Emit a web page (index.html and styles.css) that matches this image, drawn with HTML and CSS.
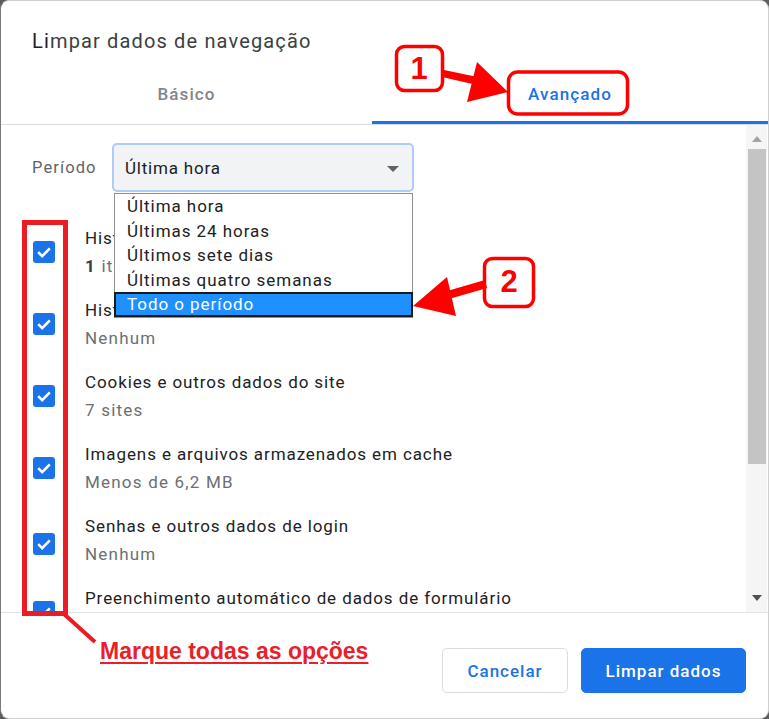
FILE: index.html
```
<!DOCTYPE html>
<html lang="pt">
<head>
<meta charset="utf-8">
<title>Limpar dados de navegação</title>
<link rel="stylesheet" href="styles.css">
</head>
<body>
<div class="stage">
  <div class="dialog">
    <div class="title"><span class="title-strong">Li</span>mpar dados de navegação</div>
    <div class="tabs">
      <div class="tab tab-basic">Básico</div>
      <div class="tab tab-active">Avançado</div>
    </div>
    <div class="body">
      <div class="content">
        <div class="period-row">
          <span class="period-label">Período</span>
          <div class="select">
            <span>Última hora</span>
            <svg class="select-arrow" width="12" height="6" viewBox="0 0 12 6"><path d="M0 0 L12 0 L6 6 Z" fill="#5f6368"/></svg>
          </div>
        </div>
        <div class="item">
          <svg class="check" width="22" height="22" viewBox="0 0 22 22"><rect x="0" y="0" width="22" height="22" rx="3" fill="#1a73e8"/><path d="M5.2 11.2 L9.2 15.2 L16.8 7.4" fill="none" stroke="#fff" stroke-width="2.6"/></svg>
          <div class="item-text"><div class="item-title">Histórico de navegação</div><div class="item-sub"><b class="num">1</b> item</div></div>
        </div>
        <div class="item">
          <svg class="check" width="22" height="22" viewBox="0 0 22 22"><rect x="0" y="0" width="22" height="22" rx="3" fill="#1a73e8"/><path d="M5.2 11.2 L9.2 15.2 L16.8 7.4" fill="none" stroke="#fff" stroke-width="2.6"/></svg>
          <div class="item-text"><div class="item-title">Histórico de downloads</div><div class="item-sub">Nenhum</div></div>
        </div>
        <div class="item">
          <svg class="check" width="22" height="22" viewBox="0 0 22 22"><rect x="0" y="0" width="22" height="22" rx="3" fill="#1a73e8"/><path d="M5.2 11.2 L9.2 15.2 L16.8 7.4" fill="none" stroke="#fff" stroke-width="2.6"/></svg>
          <div class="item-text"><div class="item-title">Cookies e outros dados do site</div><div class="item-sub">7 sites</div></div>
        </div>
        <div class="item">
          <svg class="check" width="22" height="22" viewBox="0 0 22 22"><rect x="0" y="0" width="22" height="22" rx="3" fill="#1a73e8"/><path d="M5.2 11.2 L9.2 15.2 L16.8 7.4" fill="none" stroke="#fff" stroke-width="2.6"/></svg>
          <div class="item-text"><div class="item-title">Imagens e arquivos armazenados em cache</div><div class="item-sub">Menos de 6,2 MB</div></div>
        </div>
        <div class="item item-shift">
          <svg class="check" width="22" height="22" viewBox="0 0 22 22"><rect x="0" y="0" width="22" height="22" rx="3" fill="#1a73e8"/><path d="M5.2 11.2 L9.2 15.2 L16.8 7.4" fill="none" stroke="#fff" stroke-width="2.6"/></svg>
          <div class="item-text"><div class="item-title">Senhas e outros dados de login</div><div class="item-sub">Nenhum</div></div>
        </div>
        <div class="item">
          <svg class="check" width="22" height="22" viewBox="0 0 22 22"><rect x="0" y="0" width="22" height="22" rx="3" fill="#1a73e8"/><path d="M5.2 11.2 L9.2 15.2 L16.8 7.4" fill="none" stroke="#fff" stroke-width="2.6"/></svg>
          <div class="item-text"><div class="item-title">Preenchimento automático de dados de formulário</div><div class="item-sub">Nenhum</div></div>
        </div>
      </div>
      <div class="scrollbar">
        <svg class="sb-arrow" width="10" height="6" viewBox="0 0 10 6"><path d="M0 6 L10 6 L5 0 Z" fill="#a3a3a3"/></svg>
        <div class="sb-thumb"></div>
        <div class="sb-space"></div>
        <svg class="sb-arrow" width="10" height="6" viewBox="0 0 10 6"><path d="M0 0 L10 0 L5 6 Z" fill="#505050"/></svg>
      </div>
    </div>
    <div class="footer">
      <button class="btn btn-cancel">Cancelar</button>
      <button class="btn btn-primary">Limpar dados</button>
    </div>
  </div>

  <ul class="dropdown">
    <li>Última hora</li>
    <li>Últimas 24 horas</li>
    <li>Últimos sete dias</li>
    <li>Últimas quatro semanas</li>
    <li class="dropdown-selected">Todo o período</li>
  </ul>

  <svg class="annotations" width="769" height="719" viewBox="0 0 769 719">
    <g fill="none" stroke="#f00" stroke-width="3.5">
      <rect x="396.5" y="46.5" width="46" height="44" rx="8" fill="#fff"/>
      <rect x="508.5" y="72" width="119" height="42" rx="9"/>
      <rect x="484.5" y="258.5" width="49" height="48" rx="8" fill="#fff"/>
    </g>
    <g fill="#f00" stroke="none">
      <path d="M444 70 L492 80 L490 88 L442 77 Z"/>
      <path d="M508 92 L477 62 L467 102 Z"/>
      <path d="M485 280 L447 291 L449 299 L487 288 Z"/>
      <path d="M413 306 L447 277 L456 316 Z"/>
    </g>
    <rect x="24.5" y="222.5" width="41" height="391" fill="none" stroke="#ec1c24" stroke-width="5"/>
    <path d="M64 614 L95 642" stroke="#ec1c24" stroke-width="4"/>
  </svg>
  <span class="badge badge-1">1</span>
  <span class="badge badge-2">2</span>
  <span class="note">Marque todas as opções</span>
</div>
</body>
</html>
```
FILE: styles.css
```
* { box-sizing: border-box; }
html, body { margin: 0; padding: 0; }
body {
  background: #5c5c5c;
  font-family: Roboto, "Noto Sans", "Liberation Sans", sans-serif;
  width: 769px;
  height: 719px;
  overflow: hidden;
}
.stage {
  position: relative;
  width: 769px;
  height: 719px;
}
.dialog {
  width: 769px;
  height: 719px;
  background: #fff;
  border: 1px solid #cfcfcf;
  border-left: 1px solid #7a7a7a;
  border-radius: 9px;
  display: flex;
  flex-direction: column;
  overflow: hidden;
}
.title {
  height: 59px;
  padding: 27px 0 0 31px;
  font-size: 20px;
  letter-spacing: 1.15px;
  line-height: 26px;
  color: #3c4043;
}
.title-strong { color: #202124; }
.tabs {
  height: 65px;
  display: flex;
  border-bottom: 1px solid #dadce0;
}
.tab {
  display: flex;
  align-items: center;
  justify-content: center;
  font-size: 17px;
  letter-spacing: 1.1px;
  font-weight: 500;
  padding-top: 4px;
}
.tab-basic {
  width: 371px;
  color: #80868b;
}
.tab-active {
  flex: 1;
  color: #1a73e8;
  border-bottom: 3px solid #1a73e8;
  padding-top: 7px;
}
.body {
  height: 488px;
  display: flex;
  border-bottom: 1px solid #e3e3e3;
}
.content {
  flex: 1;
  overflow: hidden;
  padding: 18px 0 0 31px;
}
.period-row {
  display: flex;
  align-items: center;
  margin-bottom: 24px;
}
.period-label {
  width: 80px;
  font-size: 16.5px;
  letter-spacing: 1.1px;
  color: #5f6368;
}
.select {
  width: 302px;
  height: 49px;
  background: #f1f3f4;
  border: 2px solid #aecbfa;
  border-radius: 5px;
  display: flex;
  align-items: center;
  justify-content: space-between;
  padding: 0 13px 0 11px;
  font-size: 17px;
  letter-spacing: 0.8px;
  color: #202124;
}
.select-arrow { margin-top: 2px; }
.item {
  height: 72px;
  display: flex;
  align-items: center;
}
.check {
  margin-left: 1px;
  flex: none;
}
.item-shift .check { margin-top: 8px; }
.item-text {
  margin-left: 30px;
  white-space: nowrap;
}
.item-title {
  height: 28px;
  line-height: 28px;
  font-size: 17px;
  letter-spacing: 0.9px;
  color: #202124;
}
.item-sub {
  height: 28px;
  line-height: 28px;
  font-size: 17px;
  letter-spacing: 1.2px;
  color: #6b6f74;
}
.num { font-weight: 700; color: #3c4043; }
.scrollbar {
  width: 21px;
  margin-right: 1px;
  background: #f5f5f5;
  display: flex;
  flex-direction: column;
  align-items: center;
}
.sb-arrow { margin-top: 11px; flex: none; }
.sb-arrow:last-child { margin: 0 0 11px 0; }
.sb-thumb {
  width: 18px;
  height: 315px;
  margin-top: 7px;
  background: #c4c4c4;
}
.sb-space { flex: 1; }
.footer {
  flex: 1;
  display: flex;
  justify-content: flex-end;
  align-items: flex-start;
  gap: 13px;
  padding: 35px 22px 0 0;
}
.btn {
  height: 45px;
  border-radius: 5px;
  font-family: Roboto, "Noto Sans", sans-serif;
  font-size: 17px;
  letter-spacing: 1px;
  font-weight: 500;
}
.btn-cancel {
  width: 126px;
  background: #fff;
  border: 1px solid #dadce0;
  color: #1a73e8;
}
.btn-primary {
  width: 165px;
  background: #1a73e8;
  border: 1px solid #1a73e8;
  color: #fff;
}
.dropdown {
  position: absolute;
  left: 114px;
  top: 193px;
  width: 299px;
  height: 125px;
  margin: 0;
  padding: 0;
  list-style: none;
  background: #fff;
  border: 1px solid #8f8f8f;
  font-size: 17px;
  letter-spacing: 0.95px;
  color: #202124;
}
.dropdown li {
  height: 24.5px;
  line-height: 24px;
  padding-left: 12px;
  white-space: nowrap;
}
.dropdown li.dropdown-selected {
  height: 25px;
  line-height: 20px;
  margin: 0 -1px;
  padding-left: 11px;
  background: #1e90ff;
  color: #fff;
  border: 2px solid #1a1a1a;
}
.annotations {
  position: absolute;
  left: 0;
  top: 0;
  pointer-events: none;
}
.badge {
  position: absolute;
  width: 46px;
  text-align: center;
  font-family: "Liberation Sans", Arial, sans-serif;
  font-weight: 700;
  font-size: 31px;
  line-height: 34px;
  color: #f00;
}
.badge-1 { left: 396px; top: 52px; }
.badge-2 { left: 486px; top: 265px; }
.note {
  position: absolute;
  left: 100px;
  top: 637px;
  font-family: "Liberation Sans", Arial, sans-serif;
  font-weight: 700;
  font-size: 23px;
  line-height: 28px;
  color: #e8202a;
  text-decoration: underline;
  text-decoration-thickness: 2px;
  text-underline-offset: 3px;
  white-space: nowrap;
}
```
